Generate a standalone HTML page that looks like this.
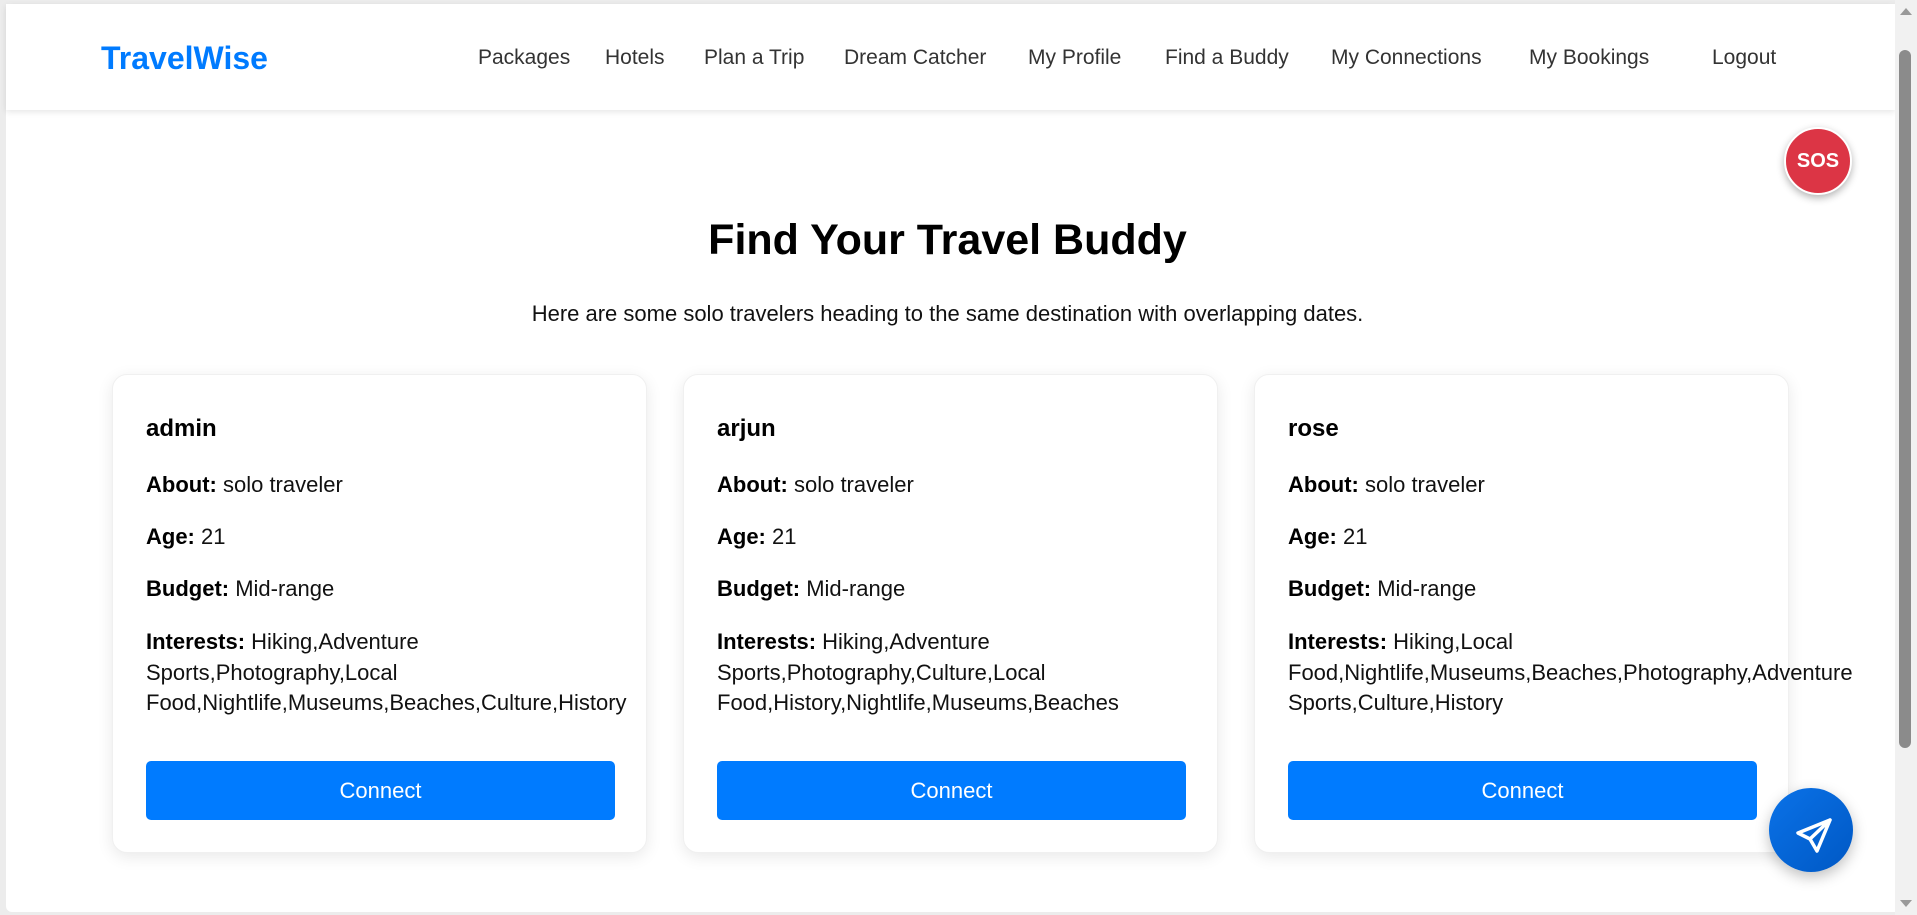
<!DOCTYPE html>
<html><head><meta charset="utf-8"><style>
*{margin:0;padding:0;box-sizing:border-box}
body{width:1917px;height:915px;overflow:hidden;background:#ececec;font-family:"Liberation Sans",sans-serif;position:relative}
.page{position:absolute;left:6px;top:4px;width:1889px;height:908px;background:#fff;border-radius:6px 0 0 6px}
.nav{position:absolute;left:6px;top:4px;width:1889px;height:106px;background:#fff;box-shadow:0 2px 6px rgba(0,0,0,.1)}
.logo{position:absolute;left:101px;top:40px;font-size:32px;font-weight:bold;color:#007bff}
.nl{position:absolute;top:46px;font-size:21px;color:#333}
.sos{position:absolute;left:1784px;top:127px;width:68px;height:68px;border-radius:50%;background:#dc3545;border:2px solid #fff;box-shadow:0 3px 8px rgba(0,0,0,.3);color:#fff;font-weight:bold;font-size:20px;text-align:center;line-height:64px}
h1{position:absolute;left:0;width:1895px;top:216px;text-align:center;font-size:43px;font-weight:bold;color:#000}
.sub{position:absolute;left:0;width:1895px;top:301px;text-align:center;font-size:22px;color:#111}
.card{position:absolute;top:374px;width:535px;height:479px;background:#fff;border-radius:15px;box-shadow:0 4px 16px rgba(0,0,0,.09);border:1px solid #f0f0f0}
.card .n{position:absolute;left:33px;top:40px;font-size:24px;font-weight:bold}
.card p{position:absolute;left:33px;font-size:22px;color:#111;white-space:nowrap;line-height:30.5px}
.card b{color:#000}
.btn{position:absolute;left:33px;top:386px;width:469px;height:59px;background:#007bff;border-radius:5px;color:#fff;font-size:22px;text-align:center;line-height:59px}
.send{position:absolute;left:1769px;top:788px;width:84px;height:84px;border-radius:50%;background:linear-gradient(135deg,#0a72e8,#0058c4);box-shadow:0 5px 14px rgba(0,0,0,.25)}
.sb{position:absolute;left:1895px;top:0;width:22px;height:915px;background:#f1f1f1}
.thumb{position:absolute;left:1899px;top:50px;width:12px;height:698px;background:#8b8b8b;border-radius:6px}
</style></head><body>
<div class="page"></div>
<div class="nav"></div>
<div class="logo">TravelWise</div>
<div class="nl" style="left:478px">Packages</div>
<div class="nl" style="left:605px">Hotels</div>
<div class="nl" style="left:704px">Plan a Trip</div>
<div class="nl" style="left:844px">Dream Catcher</div>
<div class="nl" style="left:1028px">My Profile</div>
<div class="nl" style="left:1165px">Find a Buddy</div>
<div class="nl" style="left:1331px">My Connections</div>
<div class="nl" style="left:1529px">My Bookings</div>
<div class="nl" style="left:1712px">Logout</div>
<div class="sos">SOS</div>
<h1>Find Your Travel Buddy</h1>
<div class="sub">Here are some solo travelers heading to the same destination with overlapping dates.</div>

<div class="card" style="left:112px">
<div class="n">admin</div>
<p style="top:95px"><b>About:</b> solo traveler</p>
<p style="top:147px"><b>Age:</b> 21</p>
<p style="top:199px"><b>Budget:</b> Mid-range</p>
<p style="top:252px"><b>Interests:</b> Hiking,Adventure<br>Sports,Photography,Local<br>Food,Nightlife,Museums,Beaches,Culture,History</p>
<div class="btn">Connect</div>
</div>
<div class="card" style="left:683px">
<div class="n">arjun</div>
<p style="top:95px"><b>About:</b> solo traveler</p>
<p style="top:147px"><b>Age:</b> 21</p>
<p style="top:199px"><b>Budget:</b> Mid-range</p>
<p style="top:252px"><b>Interests:</b> Hiking,Adventure<br>Sports,Photography,Culture,Local<br>Food,History,Nightlife,Museums,Beaches</p>
<div class="btn">Connect</div>
</div>
<div class="card" style="left:1254px">
<div class="n">rose</div>
<p style="top:95px"><b>About:</b> solo traveler</p>
<p style="top:147px"><b>Age:</b> 21</p>
<p style="top:199px"><b>Budget:</b> Mid-range</p>
<p style="top:252px"><b>Interests:</b> Hiking,Local<br>Food,Nightlife,Museums,Beaches,Photography,Adventure<br>Sports,Culture,History</p>
<div class="btn">Connect</div>
</div>

<div class="send"><svg width="84" height="84" viewBox="0 0 84 84"><path d="M61 32 L29 45 L41 51 L48 63 Z M61 32 L41 51" fill="none" stroke="#fff" stroke-width="3.5" stroke-linejoin="round" stroke-linecap="round"/></svg></div>

<div class="sb"></div>
<div class="thumb"></div>
<svg style="position:absolute;left:1900px;top:8px" width="12" height="8"><path d="M0 7 L6 0 L12 7Z" fill="#999"/></svg>
<svg style="position:absolute;left:1900px;top:900px" width="12" height="8"><path d="M0 0 L6 7 L12 0Z" fill="#999"/></svg>
</body></html>
